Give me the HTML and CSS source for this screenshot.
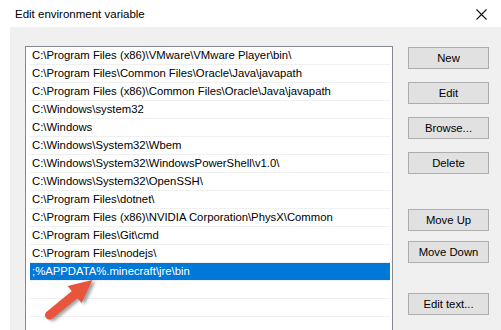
FILE: index.html
```html
<!DOCTYPE html>
<html lang="en">
<head>
    <meta charset="UTF-8">
    <title>Edit environment variable</title>
    <link rel="stylesheet" href="styles.css">
</head>
<body>
    <div class="titlebar">
        <span class="title">Edit environment variable</span>
        <span class="close">
            <svg width="11" height="11" viewBox="0 0 11 11"><path d="M0.5 0.5 L10.5 10.5 M10.5 0.5 L0.5 10.5" stroke="#111" stroke-width="1.1" fill="none"/></svg>
        </span>
    </div>

    <div class="dialog">
        <!-- Path entries -->
        <div class="list">
            <div class="row">C:\Program Files (x86)\VMware\VMware Player\bin\</div>
            <div class="row">C:\Program Files\Common Files\Oracle\Java\javapath</div>
            <div class="row">C:\Program Files (x86)\Common Files\Oracle\Java\javapath</div>
            <div class="row">C:\Windows\system32</div>
            <div class="row">C:\Windows</div>
            <div class="row">C:\Windows\System32\Wbem</div>
            <div class="row">C:\Windows\System32\WindowsPowerShell\v1.0\</div>
            <div class="row">C:\Windows\System32\OpenSSH\</div>
            <div class="row">C:\Program Files\dotnet\</div>
            <div class="row">C:\Program Files (x86)\NVIDIA Corporation\PhysX\Common</div>
            <div class="row">C:\Program Files\Git\cmd</div>
            <div class="row">C:\Program Files\nodejs\</div>
            <div class="row selected">;%APPDATA%.minecraft\jre\bin</div>
            <div class="row"></div>
            <div class="row"></div>
        </div>

        <div class="buttons">
            <button class="btn first">New</button>
            <button class="btn">Edit</button>
            <button class="btn">Browse...</button>
            <button class="btn">Delete</button>
            <button class="btn move-up">Move Up</button>
            <button class="btn move-down">Move Down</button>
            <button class="btn edit-text">Edit text...</button>
        </div>
    </div>

    <!-- Callout arrow -->
    <svg class="arrow" width="80" height="64" viewBox="0 0 80 64">
        <defs>
            <filter id="blur" x="-20%" y="-20%" width="140%" height="140%">
                <feGaussianBlur stdDeviation="1.6"/>
            </filter>
        </defs>
        <g transform="translate(12 50) rotate(-39.4)">
            <g transform="translate(1.5 3)" fill="#555" opacity="0.55" filter="url(#blur)">
                <rect x="0" y="-4.5" width="44" height="9" rx="4.5"/>
                <polygon points="37,-11 60,0 37,11"/>
            </g>
            <g fill="#e8553d">
                <rect x="0" y="-4.5" width="44" height="9" rx="4.5"/>
                <polygon points="37,-11 60,0 37,11"/>
            </g>
        </g>
    </svg>
</body>
</html>
```

FILE: styles.css
```css
body {
    margin: 0;
    width: 501px;
    height: 330px;
    overflow: hidden;
    background: #fff;
    font-family: "Liberation Sans", Arial, sans-serif;
    font-size: 11.3px;
    color: #000;
    position: relative;
}

.titlebar {
    height: 27px;
    display: flex;
    align-items: center;
    justify-content: space-between;
    padding: 0 14px 0 15px;
    background: #fff;
}

.title {
    font-size: 11.5px;
    margin-top: 1px;
}

.close {
    display: flex;
    margin-top: 1px;
}

.dialog {
    margin-left: 10px;
    height: 303px;
    background: #f0f0f0;
    display: flex;
    align-items: flex-start;
    padding: 19px 0 0 15px;
    box-sizing: border-box;
    overflow: hidden;
}

.list {
    width: 360px;
    height: 283px;
    background: #fff;
    border: 1px solid #828790;
    border-bottom: none;
    padding: 0 2px 0 4px;
}

.row {
    height: 17px;
    line-height: 17px;
    border-bottom: 1px solid #f0f0f0;
    padding-left: 2px;
    white-space: nowrap;
    overflow: hidden;
}

.row.selected {
    background: #0078d7;
    color: #fff;
}

.buttons {
    display: flex;
    flex-direction: column;
    margin-left: 15px;
}

.btn {
    width: 81px;
    height: 22px;
    margin-top: 13px;
    padding: 0;
    background: #e1e1e1;
    border: 1px solid #adadad;
    font-family: "Liberation Sans", Arial, sans-serif;
    font-size: 11.3px;
    color: #000;
}

.btn.first {
    margin-top: 1px;
}

.btn.move-up {
    margin-top: 35px;
}

.btn.move-down {
    margin-top: 10px;
}

.btn.edit-text {
    margin-top: 30px;
}

.arrow {
    position: absolute;
    left: 34px;
    top: 268px;
}
```
